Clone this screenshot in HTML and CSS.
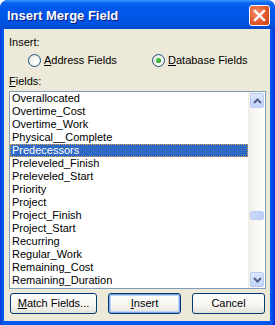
FILE: index.html
```html
<!DOCTYPE html>
<html>
<head>
<meta charset="utf-8">
<link rel="stylesheet" href="styles.css">
</head>
<body>
<div class="window">
  <div class="titlebar">
    <span class="title">Insert Merge Field</span>
    <span class="close">
      <svg width="13" height="13" viewBox="0 0 13 13"><path d="M2 2 L11 11 M11 2 L2 11" stroke="#fff" stroke-width="2.4" stroke-linecap="square"/></svg>
    </span>
  </div>
  <div class="client">
    <div class="label first">Insert:</div>
    <div class="radios">
      <div class="radio addr"><span class="circle"></span><span><u>A</u>ddress Fields</span></div>
      <div class="radio"><span class="circle on"><span class="dot"></span></span><span><u>D</u>atabase Fields</span></div>
    </div>
    <div class="label fields"><u>F</u>ields:</div>
    <div class="listbox">
      <div class="items">
        <div class="item">Overallocated</div>
        <div class="item">Overtime_Cost</div>
        <div class="item">Overtime_Work</div>
        <div class="item">Physical__Complete</div>
        <div class="item sel">Predecessors</div>
        <div class="item">Preleveled_Finish</div>
        <div class="item">Preleveled_Start</div>
        <div class="item">Priority</div>
        <div class="item">Project</div>
        <div class="item">Project_Finish</div>
        <div class="item">Project_Start</div>
        <div class="item">Recurring</div>
        <div class="item">Regular_Work</div>
        <div class="item">Remaining_Cost</div>
        <div class="item">Remaining_Duration</div>
      </div>
      <div class="scrollbar">
        <div class="sbtn"><svg width="9" height="6" viewBox="0 0 9 6"><path d="M1 5 L4.5 1.5 L8 5" fill="none" stroke="#4D6185" stroke-width="2"/></svg></div>
        <div class="track">
          <div class="thumb"></div>
        </div>
        <div class="sbtn"><svg width="9" height="6" viewBox="0 0 9 6"><path d="M1 1 L4.5 4.5 L8 1" fill="none" stroke="#4D6185" stroke-width="2"/></svg></div>
      </div>
    </div>
    <div class="buttons">
      <div class="btn match"><u>M</u>atch Fields...</div>
      <div class="btn insert default"><u>I</u>nsert</div>
      <div class="btn cancel">Cancel</div>
    </div>
  </div>
</div>
</body>
</html>
```

FILE: styles.css
```css
html, body {
  margin: 0;
  padding: 0;
  background: #ffffff;
}
body {
  width: 275px;
  height: 325px;
  overflow: hidden;
  font-family: "Liberation Sans", Arial, sans-serif;
  font-size: 11px;
  color: #000;
}
.window {
  width: 275px;
  height: 325px;
  box-sizing: border-box;
  display: flex;
  flex-direction: column;
  border-radius: 8px 8px 0 0;
  overflow: hidden;
  background: linear-gradient(to right, #0831D9 0px, #0058EE 2px, #0058EE 271px, #0831D9 275px);
}
.titlebar {
  height: 29px;
  flex: none;
  display: flex;
  align-items: center;
  justify-content: space-between;
  padding: 0 5px 0 7px;
  background: linear-gradient(to bottom, #3D95FF 0px, #0A66F0 3px, #0058EE 8px, #0055E5 18px, #0052DF 24px, #0048D0 29px);
}
.title {
  color: #fff;
  font-weight: bold;
  font-size: 13px;
  font-family: "Liberation Sans", Arial, sans-serif;
  text-shadow: 1px 1px 0 #0A1883;
  padding-top: 1px;
}
.close {
  width: 19px;
  height: 19px;
  border: 1px solid #fff;
  border-radius: 3px;
  background: radial-gradient(circle at 35% 35%, #F0906A 0%, #E2572B 55%, #C93D12 100%);
  display: flex;
  align-items: center;
  justify-content: center;
  margin-top: 1px;
}
.client {
  flex: 1;
  margin: 0 5px 4px 4px;
  background: #ECE9D8;
  padding: 0 4px 7px 5px;
  display: flex;
  flex-direction: column;
}
.label {
  line-height: 13px;
  height: 13px;
}
.label.first {
  margin-top: 7px;
}
.radios {
  display: flex;
  margin-top: 4px;
  height: 14px;
  padding-left: 19px;
}
.radio {
  display: flex;
  align-items: center;
  gap: 3px;
  line-height: 13px;
}
.radio.addr {
  width: 124px;
}
.circle {
  width: 11px;
  height: 11px;
  border: 1px solid #1C5180;
  border-radius: 50%;
  background: radial-gradient(circle at 65% 65%, #ffffff 0%, #F3F3EF 50%, #D6D5CB 100%);
  display: flex;
  align-items: center;
  justify-content: center;
  flex: none;
}
.dot {
  width: 5px;
  height: 5px;
  border-radius: 50%;
  background: radial-gradient(circle at 40% 40%, #5CDB5C 0%, #21A121 60%, #1A8A1A 100%);
}
.label.fields {
  margin-top: 8px;
}
.listbox {
  margin-top: 3px;
  height: 198px;
  box-sizing: border-box;
  border: 1px solid #7F9DB9;
  background: #fff;
  display: flex;
}
.items {
  flex: 1;
}
.item {
  height: 13px;
  line-height: 13px;
  padding-left: 2px;
  white-space: nowrap;
}
.item.sel {
  background: #316AC5;
  color: #fff;
  outline: 1px dotted #E8A64A;
  outline-offset: -1px;
}
.scrollbar {
  width: 17px;
  flex: none;
  display: flex;
  flex-direction: column;
  background: linear-gradient(to right, #F3F1EC, #FEFEFB);
  border-left: 1px solid #EEEDE5;
  box-sizing: border-box;
  padding: 1px;
}
.sbtn {
  height: 15px;
  box-sizing: border-box;
  border: 1px solid #B9CBF3;
  border-radius: 2px;
  background: linear-gradient(to bottom, #DCE7FD, #C2D4FB);
  display: flex;
  align-items: center;
  justify-content: center;
}
.track {
  flex: 1;
  position: relative;
}
.thumb {
  position: absolute;
  left: 0;
  right: 0;
  top: 103px;
  height: 9px;
  box-sizing: border-box;
  border: 1px solid #B9CBF3;
  border-radius: 2px;
  background: linear-gradient(to right, #CAD8FB, #BBCFF9);
}
.buttons {
  display: flex;
  margin-top: 4px;
  height: 21px;
  padding-left: 1px;
}
.btn {
  height: 21px;
  box-sizing: border-box;
  border: 1px solid #003C74;
  border-radius: 3px;
  background: linear-gradient(to bottom, #FFFFFF 0%, #F6F5F1 60%, #E3E2DA 100%);
  display: flex;
  align-items: center;
  justify-content: center;
  line-height: 13px;
}
.btn.match {
  width: 87px;
}
.btn.insert {
  width: 73px;
  margin-left: 11px;
}
.btn.cancel {
  width: 73px;
  margin-left: 11px;
}
.btn.default {
  box-shadow: inset 0 0 0 1px #7BA2E7, inset 0 0 0 2px #C0D3F8;
}
u {
  text-decoration: underline;
  text-underline-offset: 1px;
}
```
